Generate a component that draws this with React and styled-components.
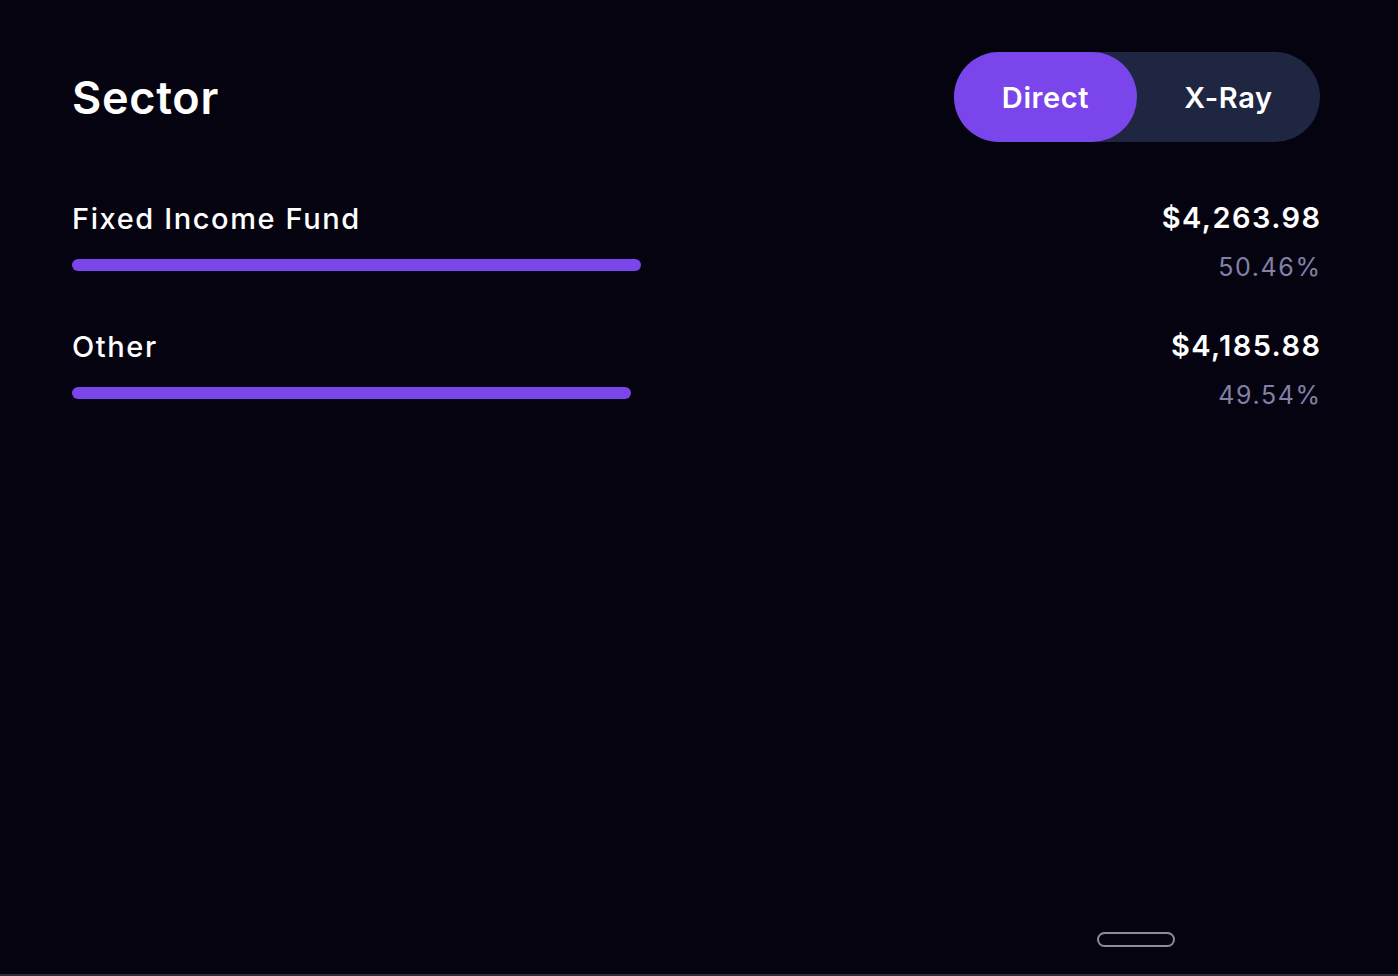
import React, { useState } from "react";
import styled, { createGlobalStyle } from "styled-components";

const GlobalStyle = createGlobalStyle`
  html, body {
    margin: 0;
    padding: 0;
    background: #05030f;
  }
  body {
    font-family: "Inter", "Noto Sans", sans-serif;
    color: #ffffff;
  }
`;

const Page = styled.div`
  width: 1398px;
  height: 976px;
  box-sizing: border-box;
  background: #05030f;
  border-bottom: 2px solid #2e2d36;
  padding: 52px 78px 0 72px;
  display: flex;
  flex-direction: column;
`;

const Header = styled.div`
  display: flex;
  justify-content: space-between;
  align-items: center;
  height: 90px;
`;

const Title = styled.h1`
  margin: 0;
  font-size: 45px;
  font-weight: 600;
  letter-spacing: 0.7px;
`;

const Toggle = styled.div`
  display: flex;
  width: 366px;
  height: 90px;
  border-radius: 45px;
  background: #1f2642;
`;

const ToggleOption = styled.button`
  flex: 1;
  border: none;
  border-radius: 45px;
  background: ${(props) => (props.active ? "#7b45ec" : "transparent")};
  color: #ffffff;
  font-family: inherit;
  font-size: 29px;
  font-weight: 600;
  letter-spacing: 0.6px;
  cursor: pointer;
`;

const List = styled.div`
  margin-top: 59px;
  display: flex;
  flex-direction: column;
`;

const Row = styled.div`
  display: flex;
  justify-content: space-between;
  height: 128px;
`;

const Left = styled.div`
  display: flex;
  flex-direction: column;
`;

const Label = styled.div`
  font-size: 29px;
  font-weight: 500;
  line-height: 36px;
  letter-spacing: 1.6px;
`;

const Bar = styled.div`
  margin-top: 22px;
  height: 12px;
  border-radius: 6px;
  background: #7b45ec;
`;

const Right = styled.div`
  display: flex;
  flex-direction: column;
  align-items: flex-end;
`;

const Amount = styled.div`
  font-size: 29px;
  font-weight: 600;
  line-height: 34px;
  letter-spacing: 1.4px;
  margin-right: -1.4px;
`;

const Percent = styled.div`
  margin-top: 17px;
  margin-right: -1.6px;
  font-size: 25px;
  font-weight: 400;
  line-height: 30px;
  color: #8380a8;
  letter-spacing: 1.6px;
`;

const Footer = styled.div`
  margin-top: auto;
  display: flex;
  justify-content: flex-end;
  padding: 0 145px 27px 0;
`;

const HomeIndicator = styled.div`
  width: 78px;
  height: 15px;
  box-sizing: border-box;
  border: 2px solid #8c8c9a;
  border-radius: 8px;
`;

const sectors = [
  { name: "Fixed Income Fund", amount: "$4,263.98", pct: 50.46 },
  { name: "Other", amount: "$4,185.88", pct: 49.54 },
];

const TRACK = 1128;

export default function App() {
  const [mode, setMode] = useState("direct");

  return (
    <>
      <GlobalStyle />
      <Page>
        <Header>
          <Title>Sector</Title>
          <Toggle>
            <ToggleOption
              active={mode === "direct"}
              onClick={() => setMode("direct")}
            >
              Direct
            </ToggleOption>
            <ToggleOption
              active={mode === "xray"}
              onClick={() => setMode("xray")}
            >
              X-Ray
            </ToggleOption>
          </Toggle>
        </Header>
        <List>
          {sectors.map((s) => (
            <Row key={s.name}>
              <Left>
                <Label>{s.name}</Label>
                <Bar style={{ width: Math.round((s.pct / 100) * TRACK) }} />
              </Left>
              <Right>
                <Amount>{s.amount}</Amount>
                <Percent>{s.pct.toFixed(2)}%</Percent>
              </Right>
            </Row>
          ))}
        </List>
        <Footer>
          <HomeIndicator />
        </Footer>
      </Page>
    </>
  );
}
